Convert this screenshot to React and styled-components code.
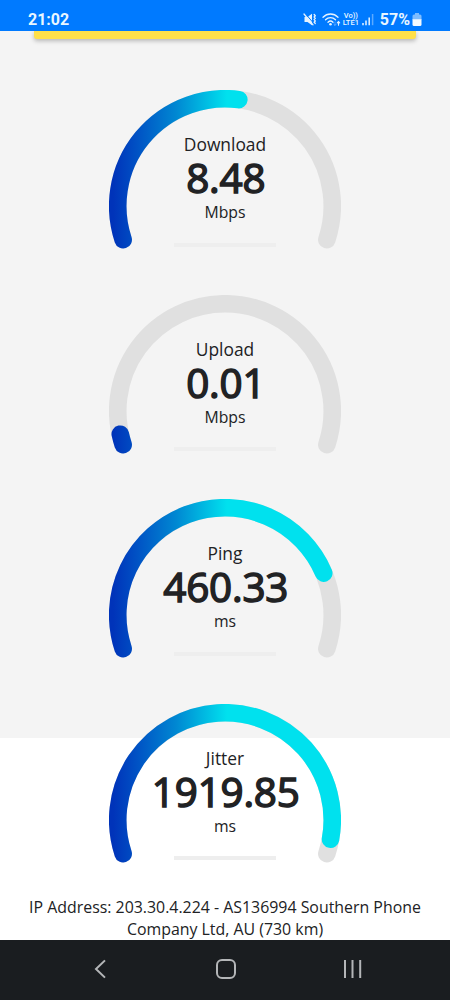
import React from 'react';
import styled, { createGlobalStyle } from 'styled-components';

const results = [
    { label: 'Download', value: '8.48', unit: 'Mbps', sweep: 115.7 },
    { label: 'Upload', value: '0.01', unit: 'Mbps', sweep: 5.8 },
    { label: 'Ping', value: '460.33', unit: 'ms', sweep: 175.3 },
    { label: 'Jitter', value: '1919.85', unit: 'ms', sweep: 208.6 },
];

// the dial opens downwards, 18.3deg under the horizontal on both sides
const START = 198.3;
const FULL = 216.6;

const point = (deg) => {
    const rad = (deg * Math.PI) / 180;
    return `${(116 + 107.25 * Math.cos(rad)).toFixed(2)} ${(116 - 107.25 * Math.sin(rad)).toFixed(2)}`;
};

const arc = (sweep) =>
    `M${point(START)} A107.25 107.25 0 ${sweep > 180 ? 1 : 0} 1 ${point(START - sweep)}`;

const Gauge = ({ label, value, unit, sweep }) => {
    return (
        <GaugeBox>
            <Dial viewBox="0 0 232 160">
                <defs>
                    <linearGradient id={`fill-${label}`} gradientUnits="userSpaceOnUse" x1="4" y1="0" x2="118" y2="0">
                        <stop offset="0" stopColor="#0033b9" />
                        <stop offset="0.2" stopColor="#0050c4" />
                        <stop offset="0.55" stopColor="#0087d2" />
                        <stop offset="1" stopColor="#00e1ee" />
                    </linearGradient>
                </defs>
                <path d={arc(FULL)} stroke="#e0e0e0" />
                <path d={arc(sweep)} stroke={`url(#fill-${label})`} />
            </Dial>
            <Reading>
                <Label>{label}</Label>
                <Value>{value}</Value>
                <Unit>{unit}</Unit>
                <Line />
            </Reading>
        </GaugeBox>
    );
};

const StatusIcons = () => (
    <svg width="72" height="18" viewBox="0 0 72 18" fill="none" stroke="#e6f3ff" strokeLinecap="round">
        {/* muted */}
        <path d="M1.5 6h3L9 2.8v11.4L4.5 11h-3z" fill="#e6f3ff" stroke="none" />
        <path d="M2 2.2l9 10.5" stroke="#007aff" strokeWidth="1" />
        <path d="M1 3l9 10.8" strokeWidth="1.3" />
        <path d="M11.2 3.5l1 1.2-1 1.3 1 1.3-1 1.3 1 1.3-1 1.3 1 1.2" strokeWidth="1.4" />
        {/* wifi */}
        <path d="M20 6.2c4.3-4.3 10.7-4.3 15 0M22.5 8.8c2.9-2.9 7.1-2.9 10 0M25 11.3c1.5-1.5 3.5-1.5 5 0" strokeWidth="1.3" />
        <circle cx="27.5" cy="13.2" r="1.3" fill="#e6f3ff" stroke="none" />
        <path d="M32 11v3.4m-1.2-1.2l1.2 1.2 1.2-1.2" strokeWidth="0.8" opacity="0.4" />
        <path d="M35.5 14.2v-3.6m-1.2 1.2l1.2-1.2 1.2 1.2" strokeWidth="1.1" />
        {/* signal */}
        <path d="M60 12v2.2M63 9.5v4.7M66.2 6.5v7.7" strokeWidth="1.5" strokeLinecap="butt" />
        <path d="M69.6 3v11.2" strokeWidth="1.5" strokeLinecap="butt" opacity="0.4" />
    </svg>
);

const App = () => {
    return (
        <Screen>
            <GlobalStyle />
            <StatusBar>
                <Clock>21:02</Clock>
                <StatusRight>
                    <IconGroup>
                        <StatusIcons />
                        <Network>
                            <span>Vo))</span>
                            <span>LTE1</span>
                        </Network>
                    </IconGroup>
                    <Percent>57%</Percent>
                    <svg width="10" height="14" viewBox="0 0 10 14">
                        <path d="M3 0h4v1.5h1a1.5 1.5 0 0 1 1.5 1.5v4h-9V3A1.5 1.5 0 0 1 2 1.5h1z" fill="#7dbcff" />
                        <path d="M.5 6.2h9v5.3A1.5 1.5 0 0 1 8 13H2a1.5 1.5 0 0 1-1.5-1.5z" fill="#f4faff" />
                    </svg>
                </StatusRight>
            </StatusBar>
            <Page>
                <YellowCard />
                <GaugeList>
                    {results.map((item) => (
                        <Gauge key={item.label} {...item} />
                    ))}
                </GaugeList>
                <Address>
                    IP Address: 203.30.4.224 - AS136994 Southern Phone<br />
                    Company Ltd, AU (730 km)
                </Address>
            </Page>
            <NavBar>
                <svg width="14" height="22" viewBox="0 0 14 22">
                    <path d="M12 2.4L3 11l9 8.6" />
                </svg>
                <svg width="22" height="22" viewBox="0 0 22 22">
                    <rect x="3" y="2" width="18" height="18" rx="5" />
                </svg>
                <svg width="20" height="22" viewBox="0 0 20 22">
                    <path d="M2 2v18M9.5 2v18M17.2 2v18" />
                </svg>
            </NavBar>
        </Screen>
    );
};

export default App;


const GlobalStyle = createGlobalStyle`
    body{
        margin: 0;
        font-family: 'Open Sans', sans-serif;
        color: #212224;
    }
`;

const Screen = styled.div`
    width: 450px;
    height: 1000px;
    display: flex;
    flex-direction: column;
    overflow: hidden;
`;

const StatusBar = styled.div`
    flex: none;
    height: 31px;
    box-sizing: border-box;
    padding: 8px 28px 0 28px;
    display: flex;
    justify-content: space-between;
    background: #007aff;
    color: #e9f6ff;
    font-family: Roboto, sans-serif;
`;

const Clock = styled.div`
    font-size: 16px;
    line-height: 23px;
    font-weight: 700;
`;

const StatusRight = styled.div`
    display: flex;
    align-items: center;
    height: 23px;
`;

const IconGroup = styled.div`
    display: grid;
    margin-right: 5px;

    > *{
        grid-area: 1 / 1;
    }
`;

const Network = styled.div`
    width: 20px;
    margin: 1px 0 0 38px;
    display: flex;
    flex-direction: column;
    align-items: center;
    font-size: 7.5px;
    line-height: 7.5px;
    font-weight: 500;
`;

const Percent = styled.div`
    font-size: 16px;
    font-weight: 700;
    line-height: 23px;
    margin-right: 2px;
`;

const Page = styled.div`
    flex: 1;
    min-height: 0;
    overflow: hidden;
    background: linear-gradient(#f4f4f4 707px, #fff 707px);
`;

const YellowCard = styled.div`
    height: 8px;
    margin: 0 34px;
    background: #ffe04a;
    border-radius: 0 0 3px 3px;
    box-shadow: 0 2px 4px rgba(0, 0, 0, 0.25);
`;

const GaugeList = styled.div`
    padding-top: 51px;
    display: flex;
    flex-direction: column;
    align-items: center;
    gap: 44.6px;
`;

const GaugeBox = styled.div`
    width: 232px;
    height: 160px;
    display: grid;

    > *{
        grid-area: 1 / 1;
    }
`;

const Dial = styled.svg`
    width: 232px;
    height: 160px;

    path{
        fill: none;
        stroke-width: 17.6;
        stroke-linecap: round;
    }
`;

const Reading = styled.div`
    display: flex;
    flex-direction: column;
    align-items: center;
    padding-top: 42px;
`;

const Label = styled.div`
    font-size: 17.4px;
    line-height: 25px;
`;

const Value = styled.div`
    padding-left: 1.5px;
    font-size: 40.4px;
    line-height: 41px;
    letter-spacing: -0.2px;
    -webkit-text-stroke: 1.5px #212224;
`;

const Unit = styled.div`
    margin-top: 2px;
    font-size: 15.8px;
    line-height: 24px;
`;

const Line = styled.div`
    width: 102px;
    height: 4px;
    margin-top: 18.5px;
    background: #eee;
`;

const Address = styled.div`
    margin-top: 33px;
    text-align: center;
    white-space: nowrap;
    font-size: 15.9px;
    line-height: 21.8px;
`;

const NavBar = styled.div`
    flex: none;
    height: 60px;
    box-sizing: border-box;
    padding: 0 87px 2px 93px;
    display: flex;
    align-items: center;
    justify-content: space-between;
    background: #1a1d20;

    svg{
        fill: none;
        stroke: #b4b6b8;
        stroke-width: 2;
    }
`;
